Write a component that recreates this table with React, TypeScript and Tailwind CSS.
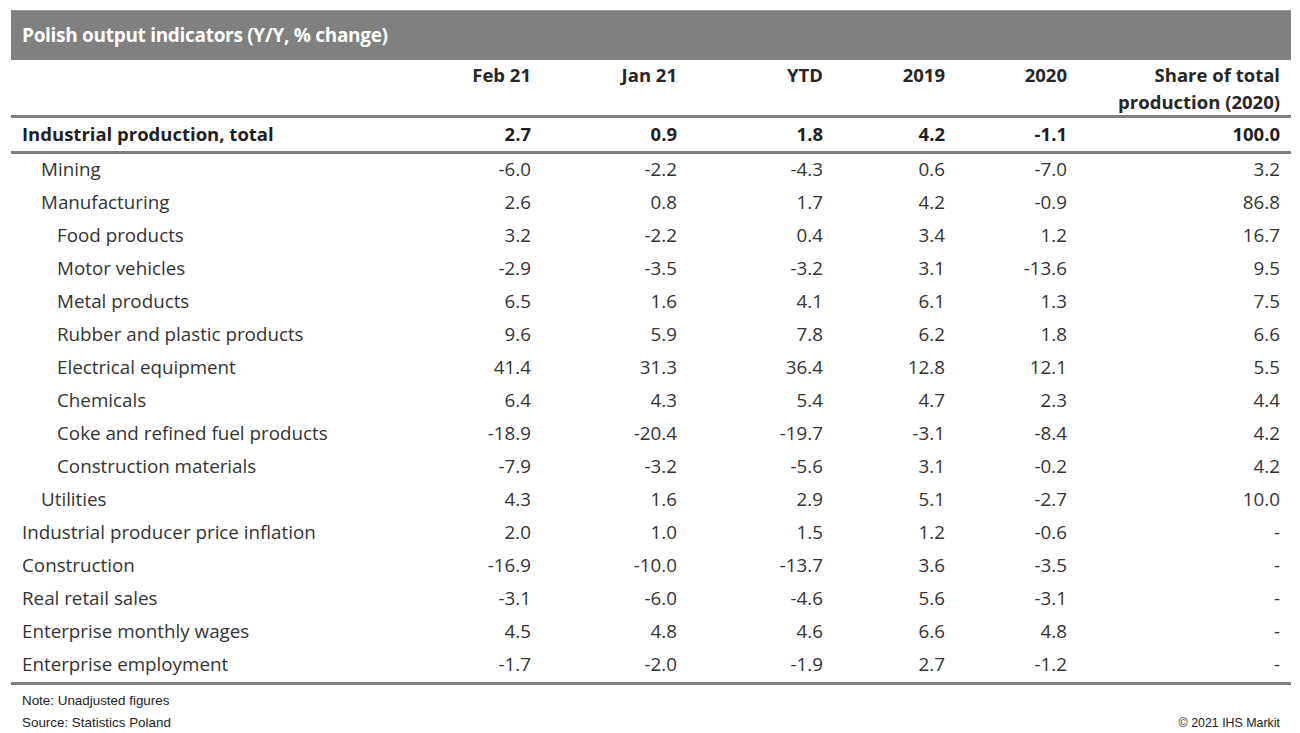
const cols = ["Feb 21", "Jan 21", "YTD", "2019", "2020"];

type Row = { label: string; level: 0 | 1 | 2; values: string[] };

const rows: Row[] = [
  { label: "Mining", level: 1, values: ["-6.0", "-2.2", "-4.3", "0.6", "-7.0", "3.2"] },
  { label: "Manufacturing", level: 1, values: ["2.6", "0.8", "1.7", "4.2", "-0.9", "86.8"] },
  { label: "Food products", level: 2, values: ["3.2", "-2.2", "0.4", "3.4", "1.2", "16.7"] },
  { label: "Motor vehicles", level: 2, values: ["-2.9", "-3.5", "-3.2", "3.1", "-13.6", "9.5"] },
  { label: "Metal products", level: 2, values: ["6.5", "1.6", "4.1", "6.1", "1.3", "7.5"] },
  { label: "Rubber and plastic products", level: 2, values: ["9.6", "5.9", "7.8", "6.2", "1.8", "6.6"] },
  { label: "Electrical equipment", level: 2, values: ["41.4", "31.3", "36.4", "12.8", "12.1", "5.5"] },
  { label: "Chemicals", level: 2, values: ["6.4", "4.3", "5.4", "4.7", "2.3", "4.4"] },
  { label: "Coke and refined fuel products", level: 2, values: ["-18.9", "-20.4", "-19.7", "-3.1", "-8.4", "4.2"] },
  { label: "Construction materials", level: 2, values: ["-7.9", "-3.2", "-5.6", "3.1", "-0.2", "4.2"] },
  { label: "Utilities", level: 1, values: ["4.3", "1.6", "2.9", "5.1", "-2.7", "10.0"] },
  { label: "Industrial producer price inflation", level: 0, values: ["2.0", "1.0", "1.5", "1.2", "-0.6", "-"] },
  { label: "Construction", level: 0, values: ["-16.9", "-10.0", "-13.7", "3.6", "-3.5", "-"] },
  { label: "Real retail sales", level: 0, values: ["-3.1", "-6.0", "-4.6", "5.6", "-3.1", "-"] },
  { label: "Enterprise monthly wages", level: 0, values: ["4.5", "4.8", "4.6", "6.6", "4.8", "-"] },
  { label: "Enterprise employment", level: 0, values: ["-1.7", "-2.0", "-1.9", "2.7", "-1.2", "-"] },
];

const grid = "grid grid-cols-[400px_131px_146px_146px_122px_122px_213px]";

const indent = (level: number) =>
  level === 2 ? "pl-[46px]" : level === 1 ? "pl-[30px]" : "pl-[11px]";

export default function App() {
  return (
    <div className="w-[1300px] h-[733px] bg-white pt-[10px] pl-[11px]" style={{ fontFamily: "'Open Sans', sans-serif" }}>
      <div className="w-[1280px]">
        {/* Title bar */}
        <div className="h-[50px] bg-[#808080] border-t border-[#9a9a9a] flex items-center pl-[11px]">
          <h1 className="text-white font-bold text-[19px] tracking-[-0.3px]">Polish output indicators (Y/Y, % change)</h1>
        </div>

        {/* Column headings */}
        <div className={`${grid} h-[58px] border-b-[3px] border-[#7f7f7f] text-[18.5px] font-bold text-[#262626] leading-[27px] pt-[1px]`}>
          <div />
          {cols.map((c) => (
            <div key={c} className="text-right pr-[11px]">{c}</div>
          ))}
          <div className="text-right pr-[11px]">Share of total<br />production (2020)</div>
        </div>

        {/* Total row */}
        <div className={`${grid} h-[36px] border-b-[3px] border-[#7f7f7f] items-center text-[18.5px] font-bold text-[#1f1f1f] pb-[2px]`}>
          <div className="pl-[11px]">Industrial production, total</div>
          {["2.7", "0.9", "1.8", "4.2", "-1.1", "100.0"].map((v, i) => (
            <div key={i} className="text-right pr-[11px]">{v}</div>
          ))}
        </div>

        {/* Body rows */}
        <div className="border-b-[3px] border-[#7f7f7f]">
          {rows.map((r) => (
            <div key={r.label} className={`${grid} h-[33px] items-center text-[18.8px] text-[#333333] pb-[2px]`}>
              <div className={indent(r.level)}>{r.label}</div>
              {r.values.map((v, i) => (
                <div key={i} className="text-right pr-[11px]">{v}</div>
              ))}
            </div>
          ))}
        </div>

        {/* Footer */}
        <div className="flex justify-between items-end pl-[11px] pr-[11px] text-[#222222] pt-[5px]" style={{ fontFamily: "'Liberation Sans', Arial, sans-serif" }}>
          <div className="leading-[22px] text-[13.4px]">
            <div>Note: Unadjusted figures</div>
            <div>Source: Statistics Poland</div>
          </div>
          <div className="leading-[22px] text-[12.4px]">© 2021 IHS Markit</div>
        </div>
      </div>
    </div>
  );
}
